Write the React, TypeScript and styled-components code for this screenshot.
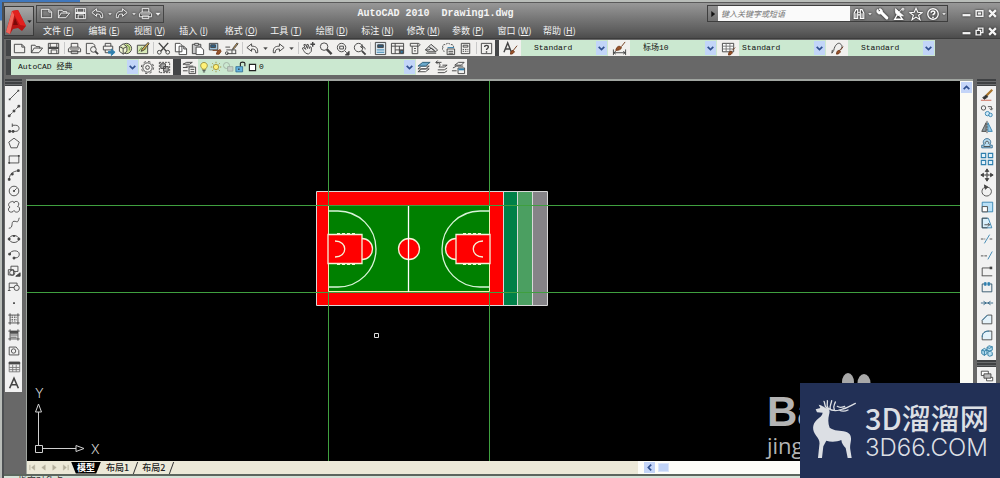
import React from "react";
import styled, { createGlobalStyle } from "styled-components";

const cjk = '"Noto Sans CJK SC", sans-serif';
const mono = `"Liberation Mono", ${cjk}`;

const GlobalStyle = createGlobalStyle`
  * { box-sizing: border-box; }
  body { margin: 0; overflow: hidden; background: #686868; font-family: ${cjk}; font-size: 9px; }
  button, input, select { margin: 0; padding: 0; border: 0; border-radius: 0; font: inherit; color: inherit; background: none; }
`;

/* ---------- icon drawings, all on a 16 x 16 grid ---------- */

const B = "#2f7fae";
const icons: Record<string, React.ReactNode> = {
  new: <path d="M2.5 3.5h8l3 3v6h-11zM10.5 3.5v3h3" />,
  open: <path d="M2.5 12.5v-8h4l1 1.500h4v2M2.500 12.500l3-5h9l-4 5z" />,
  save: <><path d="M2.500 2.500h11v11h-11zM4.500 2.500v4h7v-4M5.500 13.500v-4h6v4" /><path d="M3 7h10v1H3z" fill="currentColor" /></>,
  print: <><path d="M4.500 6.500v-4h7v4M3.500 6.500h9l2 2v3h-13v-3zM4.500 10.500h7v3h-7z" /><path d="M3 8.500h10" /></>,
  preview: <><path d="M9.500 2.500h-7v11h4M9.500 2.500l2 2v2" /><circle cx="10" cy="9" r="3" /><path d="M12 11l3 3" strokeWidth="2" /></>,
  publish: <><path d="M4.500 5.500v-3h6v3M2.500 5.500h10v4h-10zM4.500 9.500v3h4" /><path d="M8 11h3V8.500l4 3.500-4 3.500V13H8z" fill={B} stroke={B} /></>,
  dwf: <><circle cx="9" cy="8" r="5.500" fill="#d9e6a5" /><path d="M1.500 6l4-3 4 3v5l-4 3-4-3zM1.500 6l4 2 4-2M5.500 8v6" fill="#eef3d0" /><path d="M9 4l3 2v4" stroke="#5f8a2e" /></>,
  markup: <><path d="M2.500 4.500h11v9h-11z" fill="#d7e8b8" /><path d="M4 11l3-4 2 3 3-2" stroke="#5f8a2e" /><path d="M14 1.500L7.500 8.500l-1 2.500 2.500-1L15 3z" fill="#d9b24a" /></>,
  cut: <><path d="M3 2l8 9M13 2L5 11" strokeWidth="1.500" /><circle cx="3.500" cy="12" r="2" /><circle cx="12.500" cy="12" r="2" /></>,
  copy: <path d="M2.500 2.500h5l2 2v7h-7zM6.500 5.500h5l3 3v6h-8zM11.500 5.500v3h3" fill="#fff" />,
  paste: <><path d="M2.500 3.500h9v10h-9z" fill="#c6c6c6" /><path d="M5 2.500h4v2H5zM6.500 6.500h5l3 3v5h-8z" fill="#fff" /></>,
  match: <><path d="M2.500 2.500h9v7h-9z" fill="#9fc6e0" /><path d="M4 4h5v3H4z" fill="#2d5f86" /><path d="M6 10h6M10 14l1-3 3-2 1 2-2 3z" fill="#9b572b" stroke="#7b3d1d" /></>,
  block: <><path d="M2.500 9.500h6v4M1.500 6.500h5M3 13.500h10M8.500 9.500h4v4" /><path d="M14 2l-4 5-1 2 2-1 4-5z" fill="#d9a24a" /><circle cx="3" cy="13" r="1.500" /></>,
  undo: <path d="M2 7l5-4v2.500c5 0 7 2 6.500 7h-2c0-3-1-4-4.500-4V11z" />,
  redo: <path d="M14 7L9 3v2.500c-5 0-7 2-6.500 7h2c0-3 1-4 4.500-4V11z" />,
  pan: <><path d="M5 13c-2-2-3-4-3.500-5.500l1.500-.5 2 2-2-5 1.500-.5L7 8 6 4l1.500-.5L9 8l1-2 1 1v4l-3 3z" /><path d="M12.500 1v5M10 3.500h5" strokeWidth="1.500" /></>,
  zoom: <><circle cx="6.500" cy="6" r="4" /><path d="M9.500 9l5 5" strokeWidth="2.500" /></>,
  zoomwin: <><circle cx="7" cy="7" r="4.500" /><path d="M5 5.500h4v3H5zM10.500 10.500l2 2" /><path d="M15 11v4h-4z" fill="currentColor" /></>,
  zoomprev: <><circle cx="7" cy="7" r="4.500" /><path d="M10.500 10.500l4 4" strokeWidth="2" /><path d="M14 9c0-2-1-3-4-3M11.500 4L9 6l2.500 2" /></>,
  props: <><path d="M2.500 1.500h11v13h-11z" fill="#dce8f0" /><path d="M5 4h6v3H5z" fill="#2e5878" /><path d="M4 9.500h8M4 12h8" stroke={B} /></>,
  design: <><path d="M1.500 2.500h13v11h-13zM1.500 5.500h13M5.500 2.500v11M10 5.500v8M5.500 9.500h9" /><path d="M11 10h3v3h-3z" fill={B} /></>,
  palette: <><path d="M3.500 2.500h8v11h-6v-8h-2zM5.500 5.500h6M11.500 2.500c3 0 3 3 0 3M7.500 8h2M7.500 10.500h2" /></>,
  sheet: <><path d="M1.500 9.500l6-6 7 6-2 2h-8z" fill="#dcdcdc" /><path d="M1.500 9.500h4l2-2 5 4M2 13h11M5 6l6 4" /></>,
  marks: <><path d="M2 7c-1-2 1-4 3-3 1-2 4-2 5 0 3-1 4 2 3 3M2 7c-1 2 0 4 2 4" strokeDasharray="2 1" /><path d="M6.500 8.500h8v6h-8zM8 11h5M8 13h5" /><path d="M7 7h7" stroke={B} /></>,
  calc: <><path d="M3.500 2.500h9v11h-9zM5.500 4.500h5v2h-5z" /><path d="M5 9h6M5 11h6" strokeDasharray="1.500 1" /></>,
  help: <><path d="M2.500 2.500h11v11h-11z" /><path d="M6 6.500c0-2.500 4-2.500 4 0 0 1.500-2 1.500-2 3M8 11v1.500" strokeWidth="1.500" /></>,
  textstyle: <><path d="M1 12L5 2l4 10M2.500 8.500h5" strokeWidth="1.500" /><path d="M15 5l-4 5M8 14c0-3 1-4 3-4l1 1c0 2-2 3-4 3z" fill="#99522a" stroke="#70371a" /></>,
  dimstyle: <><path d="M1.500 9v6M14.500 9v6M1.500 12.500h13M4 11l-2 1.500L4 14M12 11l2 1.500-2 1.500" /><path d="M14 1l-4 5M4 10c1-4 3-5 5-4l1 1c0 2-3 3-6 3z" fill="#99522a" stroke="#70371a" /></>,
  tabstyle: <><path d="M1.500 2.500h12v9h-12z" fill="#fff" /><path d="M1.500 5.500h12M5.500 2.500v9M9.500 2.500v9M1.500 8.500h12" stroke="#777" /><path d="M15 7l-3 3M8 15c0-3 1-4 3-4l1 1c0 2-2 3-4 3z" fill="#99522a" stroke="#70371a" /></>,
  leader: <><path d="M2 13l2-3M4 10c1-6 5-9 7-7 3 2 2 5-1 7M2 13l.5-3.500" /><path d="M7 14c0-3 1-4 3-4l1 1c0 2-2 3-4 3zM14 6l-3 4" fill="#99522a" stroke="#70371a" /></>,
  gear: <><circle cx="8" cy="8" r="5" /><circle cx="8" cy="8" r="2" /><circle cx="8" cy="8" r="6.500" strokeDasharray="2.500 2.600" /></>,
  wscustom: <><path d="M2.500 2.500h11v11h-11z" strokeDasharray="2 1" /><path d="M4 4h5v5H4zM7 7h5v5H7z" fill="#aaa" /></>,
  layerprop: <><path d="M1 4.500h7l3-2H5zM1 8h5M1 11.500h5M4 6.500h8M7.500 7.500h7v7h-7zM9 10h4M9 12.500h4" /></>,
  bulb: <><path d="M5.500 10c-4-4-1-8 2.500-8s6.500 4 2.500 8v1h-5z" fill="#fff27a" stroke="#8a7b22" /><path d="M6 12.500h4M6.500 14.500h3" /></>,
  sun: <><circle cx="8" cy="8" r="3.500" fill="#fff27a" stroke="#9a8420" /><path d="M8 1v2M8 13v2M1 8h2M13 8h2M3 3l1.500 1.500M11.500 11.500L13 13M13 3l-1.500 1.500M3 13l1.500-1.500" stroke="#9a8420" /></>,
  freeze: <g stroke="#9aa69c"><circle cx="6" cy="6" r="4" /><path d="M7.500 7.500h7v6h-7z" fill="#c5cfc7" /></g>,
  lock: <><path d="M2.500 7.500h9v7h-9z" fill="#65b2de" stroke="#26668e" /><path d="M8.500 7V3c0-2 6-2 6 0v4M6.500 10v2" strokeWidth="1.500" /></>,
  swatch: <path d="M2.500 2.500h11v11h-11z" fill="#fff" strokeWidth="2" />,
  laycur: <><path d="M1 12.500h8l4-3H5zM1 9.500h8l4-3H5z" fill="#fff" /><path d="M1 6.500h8l5-4H6z" fill="#6ba9cb" stroke="#2d5f7a" /></>,
  layprev: <><path d="M4 13.500h7l3-2M4 10.500h7l3-2M5 7.500h6l3-2H9M8 2.500H2M4 .5l-2 2 2 2M2.500 2.500c5 0 4 4 3 5" /></>,
  laystate: <><path d="M1 11.500h5M2 8.500l4-2h7M4 5.500l4-3h6l-3 3zM7.500 8.500h7v6h-7z" /><path d="M8 10h6" stroke={B} strokeWidth="2" /></>,
  line: <><path d="M3 13L13 3" /><path d="M2 12h2v2H2zM12 2h2v2h-2z" fill="currentColor" stroke="none" /></>,
  xline: <><path d="M2 14L14 2" strokeDasharray="5 1" /><path d="M1.500 12.500h2v2h-2zM7 7h2v2H7zM12.500 1.500h2v2h-2z" fill="currentColor" /></>,
  pline: <><path d="M2 13h8c5 0 5-7 0-7H6M6 4v4" /><path d="M2 12h2v2H2zM6 12h2v2H6z" fill="currentColor" /></>,
  polygon: <path d="M8 2.500l6 4.500-2.500 6.500h-7L2 7z" />,
  rect: <><path d="M2.500 4.500h11v8h-11z" /><path d="M1.500 11.500h2v2h-2zM12.500 3.500h2v2h-2z" fill="currentColor" stroke="none" /></>,
  arc: <><path d="M2.500 13C3 7 6 4 13 3" /><path d="M1.500 12h2v2h-2zM5 6h2v2H5zM12 2h2v2h-2z" fill="currentColor" /></>,
  circle: <><circle cx="8" cy="8" r="5.500" /><path d="M8 8l3-3" /><circle cx="8" cy="8" r=".8" fill="currentColor" /></>,
  cloud: <path d="M5 2c2-1 3 0 3 1.500C8 2 10 1 12 2s2 4 0 5.500c2 0 3 2 2 4.500s-5 2.500-6 0c-1 2-4 2.500-5.500 1s-1-4 1-5C1 7 1 3 5 2z" />,
  spline: <path d="M2 14c6 0 2-8 6-8s4 3 6-4" />,
  ellipse: <><ellipse cx="8" cy="8" rx="5.500" ry="4" /><path d="M1.500 7h2v2h-2zM12.500 7h2v2h-2zM7 4h2v1H7z" fill="currentColor" /></>,
  earc: <><path d="M3 7c1-5 11-5 11 0 0 4-3 4.500-6 4" /><path d="M7 10.500h2v2H7zM2 6h2v2H2z" fill="currentColor" /></>,
  insert: <><path d="M4.500 2.500h8v6h-8z" /><circle cx="6" cy="10" r="3" fill="#eee" /><path d="M1.500 6.500h6v6h-6z" /><path d="M15 10v4h-5z" fill="currentColor" /></>,
  mkblock: <><path d="M2.500 3.500h9v5h-9zM2.500 8.500V12M1 12h3" /><circle cx="11" cy="9" r="3" fill="#eee" /></>,
  point: <path d="M7 7h2v2H7z" fill="currentColor" stroke="none" />,
  hatch: <><path d="M3.500 1.500v13M1.500 3.500h13M12.500 1.500v13M1.500 12.500h13" /><path d="M4 6h8M4 9h8M6 4v8M9 4v8" strokeDasharray="1 1" /></>,
  gradient: <><path d="M3.500 1.500v13M1.500 3.500h13M12.500 1.500v13M1.500 12.500h13" /><path d="M4 4h8v2H4z" fill="#555" /><path d="M4 8h8M4 10.500h7" /></>,
  region: <><path d="M2.500 12.500v-9h8l3 4v5z" /><circle cx="7.500" cy="8" r="2.500" /></>,
  table: <><path d="M2.500 2.500h12v11h-12zM6.500 5.500v8M10.500 5.500v8M2.500 8.500h12M2.500 11h12" stroke="#777" /><path d="M2.500 2.500h12v2h-12z" fill="currentColor" /></>,
  mtext: <path d="M3 14L8 2.500 13 14M5 10h6" strokeWidth="1.800" />,
  erase: <><path d="M14 2L7 9" stroke="#a8742c" strokeWidth="2.500" /><path d="M7 8l2 2-4 3-2-2z" fill="#333" /><path d="M1 14h12" stroke="#c95a45" /></>,
  copyobj: <><circle cx="4" cy="4.500" r="2.500" /><path d="M9 3h4v3M11 5l2 2 1.500-2" /><g stroke={B} fill="#cfe8f7"><circle cx="8.500" cy="11" r="2.500" /><circle cx="12" cy="12.500" r="2" /></g></>,
  mirror: <><path d="M7 3v10H2z" fill="#8f9aa1" /><path d="M9 3v10h5z" fill="#9ac9e5" stroke={B} /><path d="M8 1v14" strokeDasharray="2 1" /></>,
  offset: <><path d="M2 13.500h12v-3H11C14 6 11 3 8 3S2 6 5 10.500H2z" fill="#b9dcf0" stroke="#28638b" /><path d="M4 12h8M6 9c-1-4 5-4 4 0" /></>,
  array: <g stroke={B} strokeWidth="1.300" fill="#e1f1fa"><path d="M1.500 1.500h5v5h-5zM9.500 1.500h5v5h-5zM1.500 9.500h5v5h-5zM9.500 9.500h5v5h-5z" /></g>,
  move: <><path d="M8 1v14M1 8h14" /><path d="M6 4l2-3 2 3zM6 12l2 3 2-3zM4 6L1 8l3 2zM12 6l3 2-3 2z" fill="currentColor" /><path d="M7 7h2v2H7z" fill="#fff" /></>,
  rotate: <><path d="M6 3.500C1 5 1 12 6 13.500s9-4 6-8c-1-1-2-2-5-2" /><path d="M5 1l4 2.500L6 6z" fill="currentColor" /></>,
  scale: <><path d="M2.500 2.500h12v11h-12z" fill="#b9e0f7" stroke={B} /><path d="M2.500 7.500h6v6h-6z" fill="#fff" /></>,
  stretch: <><path d="M2.500 2.500h7l4 11h-11z" fill="#d9effb" stroke={B} /><path d="M2.500 2.500h6M2.500 2.500v11h6M5 10h6M9 8l2 2-2 2" /></>,
  trim: <><path d="M1 8h5M11 8h4" strokeDasharray="3 1" /><path d="M5 13l6-10" stroke={B} /></>,
  extend: <><path d="M1 9h8" strokeDasharray="3 1" /><path d="M9 13l5-9" stroke={B} /></>,
  breakpt: <><path d="M2.500 13.500v-9h10M2 13.500h12" /><path d="M11 3h3v3h-3z" fill="currentColor" stroke="none" /></>,
  break2: <><path d="M5 4.500H2.500v9h11v-9H11" stroke="#294f66" /><path d="M5 3h2v3H5zM9 3h2v3H9z" fill={B} stroke={B} /></>,
  join: <><path d="M1 8h5M10 8h5M6 8h4M4 6l3 2-3 2M12 6L9 8l3 2" stroke="#295f80" /></>,
  chamfer: <><path d="M2.500 13.500v-4l6-6h5v10z" fill="#e4f2fa" /><path d="M2.500 9.500l6-6" stroke={B} /></>,
  fillet: <><path d="M2.500 13.500v-3c0-5 3-7 8-7h3v10z" fill="#e4f2fa" /><path d="M2.500 10.500c0-5 3-7 8-7" stroke={B} /></>,
  explode: <g stroke="#28779f" fill="#b9def1"><path d="M2 7l3-2 3 2v4l-3 2-3-2zM8 4l2-2 4 1v4l-3 1-3-1zM9 9l3-1 2 2v3l-3 1-2-1z" /><path d="M2 7l3 1 3-1M5 8v5M8 4l3 1 3-2" /></g>,
  order: <><path d="M1.500 2.500h8v5h-8zM7.500 9.500h7v4h-7z" fill="#fff" /><path d="M4.500 5.500h8v5h-8z" fill="#bcbcbc" /></>,
  binoc: <path d="M2.500 13V7l2-4h2v10zM9.500 13V3h2l2 4v6zM6.500 6h3v3h-3zM4.500 7v5M11.500 7v5" strokeWidth="1.300" />,
  key: <><path d="M8 7l5.500 5.500" strokeWidth="3.500" strokeLinecap="round" /><path d="M3 2.500c-2 2-.5 6 3 5.500l2.500-1.500C9 3 6 1 4.500 2.500L6 4 4.500 5.500z" fill="currentColor" /></>,
  dish: <><path d="M4 2c-1 6 2 9 9 8zM8 6l4-4" fill="currentColor" /><path d="M11.500 1.500h2v2h-2z" /><path d="M6 9l-3 5h9l-3-4" strokeWidth="1.500" /></>,
  star: <path d="M8 1.500l2 4.500 5 .5-4 3 1.500 5-4.500-3-4.500 3L5 9.500l-4-3L6 6z" strokeWidth="1.300" />,
  question: <><circle cx="8" cy="8" r="6" strokeWidth="1.500" /><path d="M6 6.500c0-2.500 4-2.500 4 0 0 1.500-2 1.500-2 3M8 11v1.500" strokeWidth="1.800" /></>,
  min: <path d="M1 11h14" strokeWidth="4" />,
  max: <><path d="M2 3h12v10H2z" strokeWidth="2.500" /><path d="M6 7h4v2H6z" strokeWidth="2" /></>,
  restore: <path d="M2 6h8v8H2zM6 5V2h8v8h-3" strokeWidth="2.500" />,
  close: <path d="M2 2l12 12M14 2L2 14" strokeWidth="4" />,
  down: <path d="M2 5h12l-6 7z" fill="currentColor" />,
  right: <path d="M4 1v14l9-7z" fill="currentColor" />,
  first: <><path d="M2 2v12" strokeWidth="2" /><path d="M13 2v12L6 8z" fill="currentColor" /></>,
  prev: <path d="M12 2v12L4 8z" fill="currentColor" />,
  next: <path d="M4 2v12l8-6z" fill="currentColor" />,
  last: <><path d="M14 2v12" strokeWidth="2" /><path d="M3 2v12l7-6z" fill="currentColor" /></>,
  chevDown: <path d="M3 5l5 5 5-5" strokeWidth="3" />,
  chevUp: <path d="M3 11l5-5 5 5" strokeWidth="3" />,
  chevLeft: <path d="M11 3L6 8l5 5" strokeWidth="3" />,
};

const Svg = styled.svg`
  display: block;
  flex: none;
  fill: none;
  stroke: currentColor;
  stroke-width: 1;
`;
const Icon = ({ name, size = 15 }: { name: string; size?: number }) => (
  <Svg width={size} height={size} viewBox="0 0 16 16" aria-hidden="true">{icons[name]}</Svg>
);

const IconButton = styled.button<{ $w?: number; $h?: number }>`
  width: ${(p) => p.$w ?? 17}px;
  height: ${(p) => p.$h ?? 16}px;
  flex: none;
  display: flex;
  align-items: center;
  justify-content: center;
`;
const Tool = ({ name, w, h, size }: { name: string; w?: number; h?: number; size?: number }) => (
  <IconButton type="button" aria-label={name} $w={w} $h={h}><Icon name={name} size={size} /></IconButton>
);

/* ---------- window frame ---------- */

const Frame = styled.div`
  height: 100vh;
  padding: 2px 0 0 2px;
  display: flex;
  flex-direction: column;
  background:
    linear-gradient(#3f77bd 20px, transparent 21px) left / 80px 100% no-repeat,
    #b9bdb9;
`;
const Window = styled.div`
  flex: 1;
  min-height: 0;
  display: flex;
  flex-direction: column;
  background: #686868;
  border-left: 2px solid #4c4f52;
  border-top: 1px solid #5a5a5a;
`;
const Header = styled.header`
  display: flex;
  height: 36px;
  background: linear-gradient(#989898, #767676 45%, #5d5d5d 80%, #4c4c4c);
  border-bottom: 1px solid #3d3d3d;
  color: #f4f4f4;
`;
const AppButton = styled.button`
  width: 30px;
  height: 30px;
  margin-top: 3px;
  flex: none;
  display: flex;
  align-items: center;
  background: linear-gradient(#a8a8a8, #6d6d6d);
  border: 1px solid #3b3b3b;
  color: #222;
`;
const HeaderRows = styled.div`
  flex: 1;
  min-width: 0;
`;
const TitleRow = styled.div`
  display: flex;
  height: 21px;
  align-items: center;
`;
const QuickAccess = styled.div`
  display: flex;
  align-items: center;
  height: 18px;
  width: 128px;
  flex: none;
  margin-left: 2px;
  padding-left: 1px;
  border: 1px solid #444;
  background: linear-gradient(#8f8f8f, #6c6c6c);
  svg { filter: drop-shadow(0 0 1px #111); }
`;
const Title = styled.h1`
  flex: 1;
  margin: 0;
  text-align: center;
  white-space: pre;
  font: bold 10px/18px ${mono};
`;
const InfoCenter = styled.div`
  display: flex;
  align-items: center;
  width: 241px;
  height: 17px;
  flex: none;
  border: 1px solid #3e3e3e;
  color: #fff;
  svg { filter: drop-shadow(0 0 1px #111); }
`;
const SearchArrow = styled.span`
  width: 10px;
  flex: none;
  display: flex;
  justify-content: center;
  color: #111;
  svg { filter: none; }
`;
const Search = styled.input`
  flex: 1;
  min-width: 0;
  height: 15px;
  padding-left: 3px;
  background: #fafafa;
  font: italic 8px/15px ${cjk};
  &::placeholder { color: #777; opacity: 1; }
`;
const WindowButtons = styled.div`
  display: flex;
  flex: none;
  margin-left: auto;
  padding: 0 1px 0 12px;
  svg { filter: drop-shadow(0 0 1px #222); }
`;
const MenuRow = styled.div`
  display: flex;
  height: 14px;
  align-items: center;
  padding-left: 9px;
`;
const Menus = styled.nav`
  display: flex;
  flex: 0 1 530px;
  justify-content: space-between;
`;
const MenuItem = styled.button`
  width: 30px;
  flex: none;
  text-align: left;
  white-space: nowrap;
  line-height: 14px;
  u { text-underline-offset: 1px; }
`;

/* ---------- horizontal toolbars ---------- */

const Toolbars = styled.div`
  display: flex;
  flex-direction: column;
  gap: 3px;
  padding: 1px 0 4px 2px;
  color: #444;
`;
const Row = styled.div`
  display: flex;
  height: 16px;
`;
const Bar = styled.div<{ $after?: number }>`
  display: flex;
  align-items: center;
  height: 16px;
  background: #f1f0ee;
  border-left: ${(p) => p.$after ?? 5}px solid #444648;
`;
const Separator = styled.span`
  width: 1px;
  height: 12px;
  margin: 0 1px 0 2px;
  background: #c9c9c9;
`;
const Combo = styled.div<{ $w: number }>`
  position: relative;
  display: flex;
  align-items: center;
  width: ${(p) => p.$w}px;
  height: 16px;
  flex: none;
  background: #cbe8d0;
  color: #222;
`;
const ComboArrow = styled.span`
  position: absolute;
  top: 1px;
  right: 1px;
  width: 11px;
  height: 14px;
  display: flex;
  align-items: center;
  justify-content: center;
  pointer-events: none;
  background: #c2d5f8;
  color: #30508f;
`;
const Select = styled.select<{ $pad: number }>`
  appearance: none;
  flex: 1;
  min-width: 0;
  height: 16px;
  padding-left: ${(p) => p.$pad}px;
  font: 8px/16px ${mono};
  color: #111;
`;
const Dropdown = ({ label, value, width, pad, children }: { label: string; value: string; width: number; pad: number; children?: React.ReactNode }) => (
  <Combo $w={width}>
    {children}
    <Select aria-label={label} $pad={pad} defaultValue={value}><option>{value}</option></Select>
    <ComboArrow><Icon name="chevDown" size={9} /></ComboArrow>
  </Combo>
);

/* ---------- workspace ---------- */

const Workspace = styled.main`
  flex: 1;
  min-height: 0;
  display: grid;
  grid-template-columns: 17px minmax(0, 1fr) 19px;
  gap: 4px;
  padding: 0 4px 0 1px;
  color: #444;
`;
const Side = styled.aside`
  align-self: start;
  display: flex;
  flex-direction: column;
`;
const SideBar = styled.div`
  display: flex;
  flex-direction: column;
  align-items: center;
  padding: 1px 0;
  background: #f1f1f1;
  border: solid #3f4143;
  border-width: 7px 0 0 0;
  border-image: repeating-linear-gradient(#3f4143 0 2px, #6a6c6e 2px 3px) 7 0 0 0;
`;
const Panel = styled.section`
  display: flex;
  flex-direction: column;
  min-height: 0;
  border: solid #a0a5a0;
  border-width: 2px 0 0 1px;
`;
const ViewRow = styled.div`
  flex: 1;
  min-height: 0;
  display: flex;
`;
const Canvas = styled.div`
  position: relative;
  flex: 1;
  min-width: 0;
  overflow: hidden;
  background: #000;
`;
const Drawing = styled.svg`
  display: block;
  width: 100%;
  height: 100%;
`;
const Ucs = styled.svg`
  position: absolute;
  left: 0;
  bottom: 0;
  fill: none;
  stroke: #d0d0d0;
  text { fill: #d0d0d0; stroke: none; font: 300 13px Inter, sans-serif; }
`;
const Watermark = styled.div`
  position: absolute;
  right: 0;
  bottom: 3px;
  width: 193px;
  color: #b4b4b4;
  font: 500 22px/25px "Open Sans", sans-serif;
  strong { display: block; font: bold 42px/42px "Liberation Sans", sans-serif; }
`;
const Ears = styled.svg`
  position: absolute;
  left: 73px;
  top: -20px;
  fill: #a8a8a8;
`;
const VScroll = styled.div`
  width: 13px;
  flex: none;
  padding: 1px;
  background: #fbfbf5;
`;
const ScrollButton = styled.button`
  width: 11px;
  height: 11px;
  display: flex;
  align-items: center;
  justify-content: center;
  background: #c4d5f8;
  color: #30508f;
`;
const Thumb = styled.span`
  width: 11px;
  height: 9px;
  background: #c0d3f7;
  border: 1px solid #d9e4fa;
`;
const TabStrip = styled.div`
  display: flex;
  height: 13px;
  flex: none;
  background: #ece9d8;
`;
const Tabs = styled.div`
  flex: 65;
  display: flex;
  align-items: center;
  color: #b3af9c;
`;
const HScroll = styled.div`
  flex: 35;
  display: flex;
  align-items: center;
  gap: 3px;
  padding-left: 6px;
  background: #fdfdf8;
`;
const Tab = styled.button<{ $active?: boolean }>`
  height: 12px;
  padding: 0 ${(p) => (p.$active ? 6 : 5)}px;
  font: ${(p) => (p.$active ? "bold" : "500")} 9px/12px ${cjk};
  color: ${(p) => (p.$active ? "#fff" : "#222")};
  background: ${(p) => (p.$active ? "#000" : "none")};
  clip-path: ${(p) => (p.$active ? "polygon(0 0, 100% 0, 84% 100%, 16% 100%)" : "none")};
`;
const Slash = styled.span`
  width: 1px;
  height: 12px;
  margin: 0 1px;
  background: #333;
  transform: skewX(-20deg);
`;
const CommandLine = styled.footer`
  height: 4px;
  flex: none;
  overflow: hidden;
  padding-left: 14px;
  border-top: 2px solid #5c665e;
  background: #d5e3d8;
  color: #333;
  font: 9px/9px ${cjk};
`;

/* ---------- site badge ---------- */

const Badge = styled.div`
  position: fixed;
  right: 0;
  bottom: 0;
  display: flex;
  width: 200px;
  height: 95px;
  padding: 16px 0 0 12px;
  gap: 8px;
  background: #223056;
  color: #dcdfe4;
`;
const BadgeText = styled.div`
  display: flex;
  flex-direction: column;
  white-space: nowrap;
  font: 300 24px/24px Inter, sans-serif;
  strong { font: 500 29px/37px ${cjk}; }
`;

const menus = [["文件", "F"], ["编辑", "E"], ["视图", "V"], ["插入", "I"], ["格式", "O"], ["工具", "T"], ["绘图", "D"], ["标注", "N"], ["修改", "M"], ["参数", "P"], ["窗口", "W"], ["帮助", "H"]];
const standardTools = ["new", "open", "save", "|", "print", "preview", "publish", "dwf", "markup", "|", "cut", "copy", "paste", "match", "block", "|", "undo", "down", "redo", "down", "|", "pan", "zoom", "zoomwin", "zoomprev", "|", "props", "design", "palette", "sheet", "marks", "calc", "|", "help"];
const styles = [
  { icon: "textstyle", value: "Standard", label: "文字样式", pad: 13 },
  { icon: "dimstyle", value: "标场10", label: "标注样式", pad: 13 },
  { icon: "tabstyle", value: "Standard", label: "表格样式", pad: 3 },
  { icon: "leader", value: "Standard", label: "多重引线样式", pad: 13 },
];
const drawTools = ["line", "xline", "pline", "polygon", "rect", "arc", "circle", "cloud", "spline", "ellipse", "earc", "insert", "mkblock", "point", "hatch", "gradient", "region", "table", "mtext"];
const editTools = ["erase", "copyobj", "mirror", "offset", "array", "move", "rotate", "scale", "stretch", "trim", "extend", "breakpt", "break2", "join", "chamfer", "fillet", "explode"];

const HalfCourt = ({ flip }: { flip?: boolean }) => (
  <g transform={flip ? "translate(764 0) scale(-1 1)" : undefined} stroke="#f4f4d8" strokeWidth="1.300" fill="none">
    <path d="M301 130H311A38 38 0 0 1 311 206H301" stroke="#d9f5d9" />
    <circle cx="335" cy="168" r="10.500" fill="#f00" />
    <path d="M301 153.500h34v29h-34z" fill="#f00" />
    <path d="M308 160c13 0 13 16 0 16" />
    <path d="M310 152.500h20M310 183.500h20" strokeDasharray="3 2" strokeWidth="1" />
  </g>
);

const Court = () => (
  <Drawing role="img" aria-label="篮球场平面图">
    <path d="M290 110h187v115H290z" fill="#f00" />
    <path d="M477 110h14v115h-14z" fill="#008048" />
    <path d="M491 110h15v115h-15z" fill="#4b9f61" />
    <path d="M506 110h14v115h-14z" fill="#858387" />
    <path d="M289.500 110.500h231v114h-231zM476.500 110v115M490.500 110v115M505.500 110v115" fill="none" stroke="#d8d8d8" />
    <path d="M301 125h162v86H301z" fill="#008000" />
    <g stroke="#3f9f3f">
      <line x1="0" x2="100%" y1="124.500" y2="124.500" />
      <line x1="0" x2="100%" y1="211.500" y2="211.500" />
      <line x1="301.500" x2="301.500" y1="0" y2="100%" />
      <line x1="462.500" x2="462.500" y1="0" y2="100%" />
    </g>
    <path d="M301.500 125v85.500h161V125" fill="none" stroke="#f0efb0" />
    <HalfCourt />
    <HalfCourt flip />
    <circle cx="382" cy="168" r="10.500" fill="#f00" stroke="#f4f4d8" strokeWidth="1.300" />
    <path d="M381.500 125v86" stroke="#fff" strokeWidth="1.300" />
    <path d="M347.500 252.500h4v4h-4z" fill="none" stroke="#ddd" />
  </Drawing>
);

export default function App() {
  return (
    <Frame>
      <GlobalStyle />
      <Window>
        <Header>
          <AppButton type="button" aria-label="应用程序菜单">
            <svg width="22" height="27" viewBox="0 0 22 27" aria-hidden="true">
              <path d="M1 24L7 3l6-1 8 16-4 5-4-3-5 1-3 5z" fill="#b71414" />
              <path d="M1 24L7 3l3 1-3 13-2 9z" fill="#f0655a" />
              <path d="M7 3l6-1 8 16-6-1z" fill="#e2211f" />
              <path d="M10 10l3 7H8z" fill="#7a0909" />
            </svg>
            <Icon name="down" size={5} />
          </AppButton>
          <HeaderRows>
            <TitleRow>
              <QuickAccess>
                {["new", "open", "save", "undo"].map((n) => <Tool key={n} name={n} size={15} />)}
                <Tool name="down" w={7} size={4} />
                <Tool name="redo" size={15} />
                <Tool name="down" w={7} size={4} />
                <Tool name="print" size={15} />
                <Tool name="down" w={7} size={6} />
              </QuickAccess>
              <Title>{"AutoCAD 2010  Drawing1.dwg"}</Title>
              <InfoCenter>
                <SearchArrow><Icon name="right" size={6} /></SearchArrow>
                <Search aria-label="搜索" placeholder="键入关键字或短语" />
                <Tool name="binoc" size={14} />
                <Tool name="down" w={6} size={4} />
                <Tool name="key" size={14} />
                <Tool name="dish" size={14} />
                <Tool name="star" size={14} />
                <Tool name="question" size={14} />
                <Tool name="down" w={6} size={4} />
              </InfoCenter>
              <WindowButtons>
                {["min", "max", "close"].map((n) => <Tool key={n} name={n} w={13} size={9} />)}
              </WindowButtons>
            </TitleRow>
            <MenuRow>
              <Menus>
                {menus.map(([name, key]) => <MenuItem type="button" key={key}>{name} (<u>{key}</u>)</MenuItem>)}
              </Menus>
              <WindowButtons>
                {["min", "restore", "close"].map((n) => <Tool key={n} name={n} w={13} size={9} />)}
              </WindowButtons>
            </MenuRow>
          </HeaderRows>
        </Header>

        <Toolbars>
          <Row>
            <Bar>
              {standardTools.map((n, i) =>
                n === "|" ? <Separator key={i} /> : <Tool key={i} name={n} w={n === "down" ? 9 : 17} size={n === "down" ? 5 : 15} />
              )}
            </Bar>
            <Bar $after={4}>
              {styles.map((s) => (
                <React.Fragment key={s.icon}>
                  <Tool name={s.icon} w={22} />
                  <Dropdown label={s.label} value={s.value} width={87} pad={s.pad} />
                </React.Fragment>
              ))}
            </Bar>
          </Row>
          <Row>
            <Bar>
              <Dropdown label="工作空间" value="AutoCAD 经典" width={128} pad={7} />
              <Tool name="gear" />
              <Tool name="wscustom" />
            </Bar>
            <Bar $after={8}>
              <Tool name="layerprop" />
              <Dropdown label="图层" value="0" width={218} pad={1}>
                {["bulb", "sun", "freeze", "lock", "swatch"].map((n) => <Tool key={n} name={n} w={12} size={n === "swatch" ? 9 : 12} />)}
              </Dropdown>
              <Tool name="laycur" />
              <Tool name="layprev" />
              <Tool name="laystate" />
            </Bar>
          </Row>
        </Toolbars>

        <Workspace>
          <Side>
            <SideBar>{drawTools.map((n) => <Tool key={n} name={n} size={14} />)}</SideBar>
          </Side>
          <Panel>
            <ViewRow>
              <Canvas>
                <Court />
                <Ucs width="84" height="80" viewBox="0 0 84 80" role="img" aria-label="坐标系">
                  <path d="M8.500 64.500h7v7h-7zM11.500 64V31M16 67.500h33M11.500 23l-3 8h6zM57 67.500l-8-3v6z" />
                  <text x="8" y="17">Y</text>
                  <text x="64" y="73">X</text>
                </Ucs>
                <Watermark>
                  <Ears width="40" height="24" viewBox="0 0 40 24" aria-hidden="true">
                    <ellipse cx="8" cy="11" rx="6" ry="9" />
                    <ellipse cx="24" cy="12" rx="6.500" ry="9" />
                  </Ears>
                  <strong>Ba</strong>
                  jing
                </Watermark>
              </Canvas>
              <VScroll><ScrollButton type="button" aria-label="向上滚动"><Icon name="chevUp" size={9} /></ScrollButton></VScroll>
            </ViewRow>
            <TabStrip>
              <Tabs>
                {["first", "prev", "next", "last"].map((n) => <Tool key={n} name={n} w={11} h={12} size={7} />)}
                <Tab type="button" $active>模型</Tab>
                <Tab type="button">布局1</Tab>
                <Slash />
                <Tab type="button">布局2</Tab>
                <Slash />
              </Tabs>
              <HScroll>
                <ScrollButton type="button" aria-label="向左滚动"><Icon name="chevLeft" size={9} /></ScrollButton>
                <Thumb />
              </HScroll>
            </TabStrip>
          </Panel>
          <Side>
            <SideBar>{editTools.map((n) => <Tool key={n} name={n} size={14} />)}</SideBar>
            <SideBar><Tool name="order" size={14} /></SideBar>
          </Side>
        </Workspace>
        <CommandLine>指定对角点:</CommandLine>
      </Window>

      <Badge>
        <svg width="45" height="61" viewBox="0 0 135 183" fill="#dcdfe4" aria-hidden="true">
          <path d="M11 31l14-4-5-10c9 2 16 6 20 10l10 2c4 6 3 12 1 19-3 13-3 26 2 38 13 10 32 8 48 12 14 4 17 14 16 25-1 10-4 18-2 29l4 25h-12l-6-30c-7-8-12-13-13-24-14 6-31 7-45 2l-9 17-4 35H18l4-39c2-10-2-19-9-27C-2 92 2 75 14 63c10-9 17-13 18-22l-17-1z" />
          <path d="M48 28c12 8 29 8 44 2 15-3 23-10 38-17M45 28C35 20 40 12 36 7M48 26C42 18 48 12 46 5M55 30c-3-10 3-15 4-25M67 32c-5-12 1-15 3-23M76 22c8 6 14 3 22 0M81 33c11 6 19 4 27 0" fill="none" stroke="#dcdfe4" strokeWidth="4" strokeLinecap="round" />
        </svg>
        <BadgeText>
          <strong>3D溜溜网</strong>
          3D66.COM
        </BadgeText>
      </Badge>
    </Frame>
  );
}
